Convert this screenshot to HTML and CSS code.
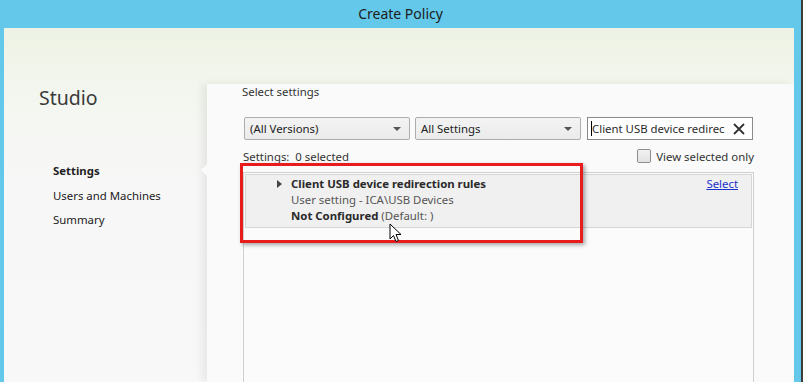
FILE: index.html
```html
<!DOCTYPE html>
<html lang="en">
<head>
    <meta charset="UTF-8">
    <title>Create Policy</title>
    <link rel="stylesheet" href="styles.css">
</head>
<body>
    <div class="window">
        <div class="titlebar">Create Policy</div>
        <div class="frame">
            <div class="content">
                <aside class="sidebar">
                    <h1 class="brand">Studio</h1>
                    <ul class="steps">
                        <li class="step current">Settings</li>
                        <li class="step">Users and Machines</li>
                        <li class="step">Summary</li>
                    </ul>
                </aside>

                <main class="panel">
                    <span class="notch"></span>
                    <p class="panel-title">Select settings</p>

                    <div class="filters">
                        <div class="dropdown">(All Versions)<span class="caret"></span></div>
                        <div class="dropdown">All Settings<span class="caret"></span></div>
                        <div class="search">
                            <span class="search-text">Client USB device redirec</span>
                            <svg class="clear" width="12" height="12" viewBox="0 0 12 12">
                                <path d="M1 1 L11 11 M11 1 L1 11" stroke="#333" stroke-width="1.8" fill="none"/>
                            </svg>
                        </div>
                    </div>

                    <div class="status">
                        <span>Settings:&nbsp; 0 selected</span>
                        <label class="view-only"><span class="checkbox"></span>View selected only</label>
                    </div>

                    <div class="list">
                        <div class="setting">
                            <span class="expander"></span>
                            <div class="setting-info">
                                <div class="setting-name">Client USB device redirection rules</div>
                                <div class="setting-path">User setting - ICA\USB Devices</div>
                                <div class="setting-state"><strong>Not Configured</strong> (Default: )</div>
                            </div>
                            <a class="select-link" href="#">Select</a>
                        </div>
                    </div>
                </main>
            </div>

            <!-- callout drawn over the screenshot -->
            <div class="highlight"></div>
            <svg class="pointer" width="14" height="21" viewBox="0 0 14 21">
                <path d="M1 1 L1 16 L4.5 12.5 L7 18.5 L9.5 17.5 L7 11.5 L12 11.5 Z" fill="#fff" stroke="#000" stroke-width="1" stroke-linejoin="miter"/>
            </svg>
        </div>
    </div>
</body>
</html>
```

FILE: styles.css
```css
:root {
    --chrome: #63c8e9;
    --text: #2b2b2b;
    --muted: #555;
    --line: #cfcfcf;
}

* {
    margin: 0;
    padding: 0;
    box-sizing: border-box;
}

html, body {
    height: 100%;
    overflow: hidden;
}

body {
    background: #3d3d3d;
    font-family: 'Noto Sans', 'Open Sans', sans-serif;
    font-size: 11.4px;
    color: var(--text);
}

.window {
    width: 801px;
    height: 100%;
    display: flex;
    flex-direction: column;
    background: var(--chrome);
}

.titlebar {
    height: 28px;
    line-height: 27px;
    text-align: center;
    font-size: 14px;
    color: #1c1c1c;
}

.frame {
    flex: 1;
    position: relative;
    padding: 0 7px 0 4px;
    display: flex;
    overflow: hidden;
}

.content {
    flex: 1;
    display: flex;
    background: linear-gradient(#edf3e3 0, #f1f5eb 40px, #f5f7f2 90px, #f7f7f7 160px, #f8f8f8);
}

/* sidebar */
.sidebar {
    width: 203px;
    flex-shrink: 0;
    padding: 57px 0 0 35px;
}

.brand {
    font-size: 19.5px;
    font-weight: 400;
    color: #3a3a3a;
    line-height: 26px;
}

.steps {
    list-style: none;
    margin-top: 48px;
    padding-left: 14px;
}

.step {
    line-height: 24.5px;
    color: #222;
}

.step.current {
    font-weight: 700;
}

/* main panel */
.panel {
    flex: 1;
    position: relative;
    margin-top: 56px;
    padding: 0 40px 0 35px;
    background: #fafafa;
    box-shadow: -5px 0 8px rgba(0, 0, 0, 0.07);
}

.notch {
    position: absolute;
    left: -6px;
    top: 80px;
    border-top: 6px solid transparent;
    border-bottom: 6px solid transparent;
    border-right: 6px solid #fafafa;
}

.panel-title {
    line-height: 16px;
    color: #333;
}

.filters {
    display: flex;
    margin: 17px 0 0 2px;
    gap: 5px;
}

.dropdown {
    position: relative;
    width: 166px;
    height: 23px;
    line-height: 21px;
    padding-left: 5px;
    border: 1px solid #adadad;
    border-radius: 2px;
    background: linear-gradient(#f3f3f3, #ebebeb);
    color: #222;
}

.caret {
    position: absolute;
    right: 8px;
    top: 9px;
    border-left: 4px solid transparent;
    border-right: 4px solid transparent;
    border-top: 4px solid #555;
}

.search {
    margin-left: 1px;
    width: 166px;
    height: 23px;
    display: flex;
    align-items: center;
    justify-content: space-between;
    padding: 0 7px 0 3px;
    border: 1px solid #8a8a8a;
    background: #fff;
    white-space: nowrap;
    overflow: hidden;
}

.search-text {
    border-left: 1px solid #000;
    line-height: 15px;
}

.status {
    display: flex;
    justify-content: space-between;
    align-items: center;
    height: 16px;
    margin: 8px 0 0 1px;
    color: #333;
}

.view-only {
    display: flex;
    align-items: center;
    gap: 5px;
}

.checkbox {
    width: 14px;
    height: 14px;
    border: 1px solid #8e8e8e;
    border-radius: 2px;
    background: linear-gradient(#f2f2f2, #e2e2e2);
}

.list {
    margin: 8px 0 0 1px;
    height: 240px;
    border: 1px solid var(--line);
    background: #fbfbfb;
    padding: 1px;
}

.setting {
    display: flex;
    height: 54px;
    padding: 1px 13px 0 31px;
    background: #f0f0f0;
    border: 1px solid #d6d6d6;
}

.expander {
    margin-top: 4px;
    width: 0;
    height: 0;
    border-top: 4px solid transparent;
    border-bottom: 4px solid transparent;
    border-left: 5px solid #444;
}

.setting-info {
    flex: 1;
    margin-left: 9px;
    line-height: 16px;
}

.setting-name {
    font-weight: 700;
    color: #2a2a2a;
}

.setting-path {
    color: var(--muted);
}

.setting-state {
    color: var(--muted);
}

.setting-state strong {
    color: #2a2a2a;
}

.select-link {
    color: #1a33cc;
    line-height: 16px;
}

/* overlays */
.highlight {
    position: absolute;
    left: 240px;
    top: 135px;
    width: 343px;
    height: 80px;
    border: 3px solid #e81c1c;
    box-shadow: 2px 2px 4px rgba(0, 0, 0, 0.35);
}

.pointer {
    position: absolute;
    left: 389px;
    top: 195px;
}
```
